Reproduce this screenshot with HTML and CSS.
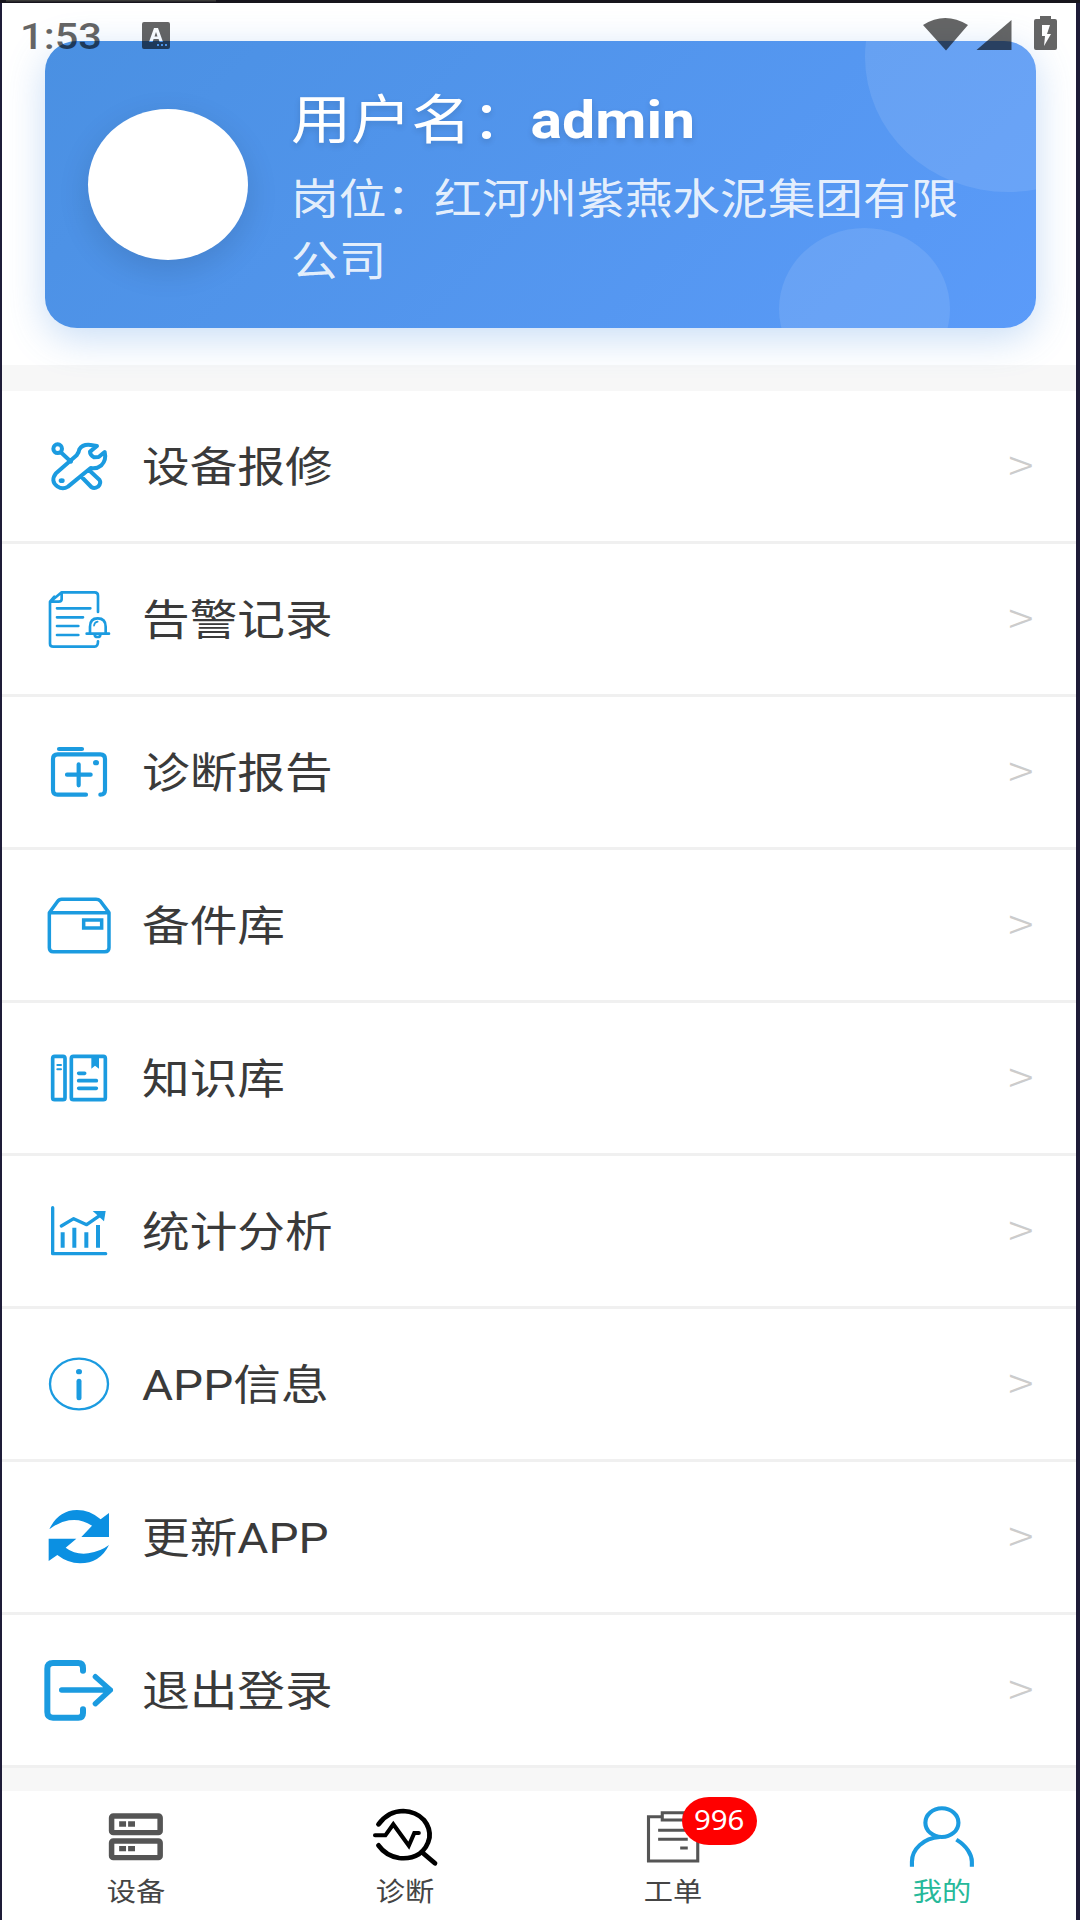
FILE: index.html
```html
<!DOCTYPE html>
<html lang="zh-CN">
<head>
<meta charset="utf-8">
<title>我的</title>
<link rel="stylesheet" href="styles.css">
</head>
<body>
<div class="device">
  <div class="status">
    <span class="clock">1:53</span>
    <svg class="ime" viewBox="0 0 28 27"><path fill-rule="evenodd" d="M2 0h24q2 0 2 2v23q0 2-2 2H2q-2 0-2-2V2q0-2 2-2zM12 6L7 20h3.600l1-3h5l1 3H21L16 6zM14 10l1.500 4.500h-3zM15 22v2h2v-2zM19 22v2h2v-2zM23 22v2h2v-2z"/></svg>
    <svg class="signals" viewBox="923 16 135 35"><path d="M923 25Q945 11 968 25L946 50.500zM1011.500 20V50H976.500z"/><path fill-rule="evenodd" d="M1040 19V16h11v3h4q2 0 2 2v27q0 2-2 2h-19q-2 0-2-2V21q0-2 2-2zM1042 25v11h3l-1 10 7-12h-4l3-9z"/></svg>
  </div>
  <main class="screen">
    <header class="profile">
      <section class="card">
        <i class="bubble bubble-large"></i><i class="bubble bubble-small"></i>
        <div class="avatar"></div>
        <div class="info">
          <p class="user"><span>用户名：</span><b>admin</b></p>
          <p class="post">岗位：红河州紫燕水泥集团有限公司</p>
        </div>
      </section>
    </header>
    <ul class="menu">
      <li class="row">
        <svg class="icon" viewBox="126 88 216 216"><g class="line" stroke-width="12"><ellipse cx="173" cy="144" rx="13" ry="13"/><path d="M184 156L213 183M168 218L230 164Q237 155 238 146Q248 130 272 133L291 136L270 153Q270 163 282 170L296 169L314 154Q320 178 304 194Q289 206 272 202L204 258Q188 268 172 257Q150 241 168 218zM245 229L274 259Q283 265 294 258Q305 248 298 237L266 207"/></g><ellipse class="solid" cx="185" cy="240" rx="9" ry="7"/></svg>
        <span class="label">设备报修</span><span class="arrow">&gt;</span>
      </li>
      <li class="row">
        <svg class="icon" viewBox="126 547 216 216"><g class="line" stroke-width="8"><path d="M294 634V585Q294 575 284 575H185L150 604V729Q150 738 160 738H284Q294 738 294 722M185 575V596Q185 603 176 603H150L163 588"/><path d="M171 623H271M171 650H249M171 676H235M171 703H235"/><path d="M260 699H327M270 698V678Q270 653 293 653Q317 653 317 678V698M284 702Q284 709 293 709Q301 709 301 702"/><path d="M282 675Q283 665 293 663" stroke-width="5"/></g></svg>
        <span class="label">告警记录</span><span class="arrow">&gt;</span>
      </li>
      <li class="row">
        <svg class="icon" viewBox="126 106 216 216"><g class="line" stroke-width="12.500"><path d="M177 145H246M258 282H173Q159 282 159 268V175Q159 161 173 161H301Q315 161 315 175V268Q315 282 301 282M236 191V254M201 222H272"/></g><ellipse class="solid" cx="288" cy="186" rx="9" ry="8"/></svg>
        <span class="label">诊断报告</span><span class="arrow">&gt;</span>
      </li>
      <li class="row">
        <svg class="icon" viewBox="126 565 216 216"><g class="line" stroke-width="10.500"><path d="M148 636V741Q148 753 160 753H314Q327 753 327 741V636zM148 636L172 603Q177 596 185 596H288Q296 596 301 601L327 636"/><path d="M251 658H305V682H251z" stroke-linejoin="miter"/></g></svg>
        <span class="label">备件库</span><span class="arrow">&gt;</span>
      </li>
      <li class="row">
        <svg class="icon" viewBox="126 123 216 216"><g class="line" stroke-width="11"><rect x="158" y="166" width="37" height="130" rx="6"/><rect x="214" y="166" width="102" height="130" rx="6"/><path d="M236 217H254M236 239H289M236 262H289"/><path d="M172 192H183M172 205H183" stroke-width="6"/></g><path class="solid" d="M274 166H297V203L285 194L274 203z"/></svg>
        <span class="label">知识库</span><span class="arrow">&gt;</span>
      </li>
      <li class="row">
        <svg class="icon" viewBox="126 582 216 216"><g class="line" stroke-width="10"><path d="M158 620V758H317"/><path d="M184 675L221 653L260 671L300 643"/><path d="M188 694V740M223 680V740M259 694V740M294 672V740" stroke-linecap="butt" stroke-width="12"/></g><path class="solid" d="M278 630H317L312 661z"/></svg>
        <span class="label">统计分析</span><span class="arrow">&gt;</span>
      </li>
      <li class="row">
        <svg class="icon" viewBox="126 141 216 216"><g class="line" stroke-width="7"><ellipse cx="237" cy="249" rx="87" ry="76"/><path d="M237 241V290" stroke-width="15"/></g><ellipse class="solid" cx="237" cy="212" rx="9" ry="8"/></svg>
        <span class="label">APP信息</span><span class="arrow">&gt;</span>
      </li>
      <li class="row">
        <svg class="icon refresh" viewBox="126 600 216 216"><path d="M148 685Q174 628 231 627Q270 627 302 655L327 636V708H244L276 674Q243 652 207 658Q175 663 148 685zM327 732Q300 787 240 787Q203 786 172 762L146 780V713H229L197 740Q226 762 265 757Q302 751 327 732z"/></svg>
        <span class="label">更新APP</span><span class="arrow">&gt;</span>
      </li>
      <li class="row">
        <svg class="icon" viewBox="126 159 216 216"><g class="line" stroke-width="18"><path d="M249 209V202Q249 186 235 186H159Q142 186 142 203V333Q142 350 159 350H235Q249 350 249 336V325"/><path d="M185 267H331M286 227L331 267L286 308" stroke-width="16"/></g></svg>
        <span class="label">退出登录</span><span class="arrow">&gt;</span>
      </li>
    </ul>
    <nav class="tabs">
      <a class="tab">
        <svg class="tab-icon" viewBox="300 612 216 198"><g transform="scale(1.0332 1)" fill="none" stroke="#555" stroke-width="16" stroke-linejoin="round"><rect x="324" y="648" width="141" height="50" rx="5"/><rect x="324" y="723" width="141" height="50" rx="5"/><path d="M346 672H366M372 672H392M346 746H366M372 746H392"/></g></svg>
        <span>设备</span>
      </a>
      <a class="tab">
        <svg class="tab-icon" viewBox="1106 612 216 198"><g transform="scale(1.0332 1)" fill="none" stroke="#000" stroke-width="14" stroke-linecap="round"><path d="M1098 673Q1126 633 1170 633Q1207 634 1230 660Q1249 684 1246 713Q1240 744 1216 762Q1191 778 1158 774Q1119 767 1098 736M1226 758L1262 790"/><path d="M1088 706H1118L1141 673L1186 737L1202 699H1215" stroke-width="12"/></g></svg>
        <span>诊断</span>
      </a>
      <a class="tab">
        <svg class="tab-icon" viewBox="292 612 216 198"><g transform="scale(1.0332 1)" fill="none" stroke="#555" stroke-width="9"><path d="M356 650H316V783H459V650H420M356 638H420V660H356zM344 691H430M344 718H430M408 744H430"/></g></svg>
        <em class="badge"><span>996</span></em>
        <span>工单</span>
      </a>
      <a class="tab active">
        <svg class="tab-icon" viewBox="1097 612 216 198"><g transform="scale(1.0332 1)" fill="none" stroke="#1b9be0" stroke-width="12"><ellipse cx="1166" cy="668" rx="48" ry="43"/><path d="M1079 800V785C1079 748 1112 714 1160 711M1208 719C1238 738 1253 764 1253 785V800"/></g></svg>
        <span>我的</span>
      </a>
    </nav>
  </main>
</div>
</body>
</html>
```
FILE: styles.css
```css
* { box-sizing: border-box; margin: 0; padding: 0; }
body {
  width: 1080px; height: 1920px; overflow: hidden; background: #1e1c38;
  font-family: Roboto, "Noto Sans CJK SC", sans-serif;
}
.device {
  position: relative; width: 1080px; height: 1920px; padding: 3px 4px 0 2px;
  background:
    linear-gradient(#3b3a38, #3b3a38) 6px 0 / 210px 1.500px no-repeat,
    linear-gradient(#17151d 3px, #1e1c38 3px);
}
.screen { display: flex; flex-direction: column; height: 1917px; background: #f7f7f7; overflow: hidden; }

/* system status bar, floats over the page */
.status {
  position: absolute; z-index: 2; top: 16px; left: 20px; right: 22px; height: 36px;
  display: flex; align-items: flex-start; opacity: .6; color: #000;
}
.clock {
  width: 122px; font-size: 37px; line-height: 41px; font-weight: 500;
  transform: scaleX(1.125); transform-origin: 0 0;
}
.ime { width: 28px; height: 27px; margin-top: 5.500px; }
.signals { width: 135px; height: 35px; margin-left: auto; }

.profile { height: 362px; padding: 38px 40px 0 42.500px; background: #fff; }
.card {
  position: relative; display: flex; align-items: flex-start; gap: 43px;
  height: 287px; padding-left: 43px; border-radius: 32px / 30px; overflow: hidden;
  background: linear-gradient(135deg, #4a90e2, #5b9bf9);
  box-shadow: 0 10px 38px rgba(74, 144, 226, .3);
}
.bubble { position: absolute; border-radius: 50%; background: rgba(255, 255, 255, .1); }
.bubble-large { left: 820px; top: -119px; width: 286px; height: 270px; }
.bubble-small { left: 734px; top: 187px; width: 171px; height: 162px; }
.avatar {
  flex: none; width: 160px; height: 151px; margin-top: 68px; border-radius: 50%;
  background: #fff; box-shadow: 0 10px 32px rgba(0, 0, 0, .12);
}
.info { flex: none; width: 600px; padding-top: 38px; transform: scaleX(1.135); transform-origin: 0 0; color: #fff; }
.user {
  display: flex; height: 90px; line-height: 84px; font-size: 53px;
  text-shadow: 0 3px 6px rgba(0, 0, 0, .12);
}
.user b { margin-left: -1px; font-size: 52px; }
.post { font-size: 42px; line-height: 62px; color: rgba(255, 255, 255, .87); }

.menu { list-style: none; margin-top: 25.500px; background: #fff; }
.row {
  display: flex; align-items: center; height: 153px; padding: 0 42.500px 0 39.500px;
  border-bottom: 3px solid #f0f0f0;
}
.icon { flex: none; width: 72px; height: 72px; margin-right: 28px; }
.line { fill: none; stroke: #1b9be0; stroke-linecap: round; stroke-linejoin: round; }
.solid { fill: #1b9be0; }
.refresh { fill: #0b90e2; }
.label {
  padding-bottom: 4px; font-size: 42px; color: #3a3a3a;
  transform: scaleX(1.135); transform-origin: 0 50%;
}
.arrow {
  margin-left: auto; padding-bottom: 5px; color: #ccc;
  font: 200 44px "Noto Sans CJK SC Light", "Noto Sans CJK SC", sans-serif; line-height: 1;
  transform: scaleX(1.07); transform-origin: 100% 50%;
}

.tabs { display: flex; height: 129px; margin-top: auto; background: #fff; }
.tab {
  position: relative; flex: 1; display: flex; flex-direction: column; align-items: center;
  padding-top: 13px; font-size: 26px; line-height: 45px; color: #444;
}
.tab > span { transform: scaleX(1.125); }
.tab-icon { flex: none; width: 72px; height: 66px; }
.active { color: #26b99a; }
.badge {
  position: absolute; left: 143px; top: 5.500px; width: 75px; height: 48px; border-radius: 27px / 24px;
  background: #f00; color: #fff; font: 27px/46px "Noto Sans", sans-serif; text-align: center;
}
.badge span { display: inline-block; transform: scaleX(1.09); }
```
